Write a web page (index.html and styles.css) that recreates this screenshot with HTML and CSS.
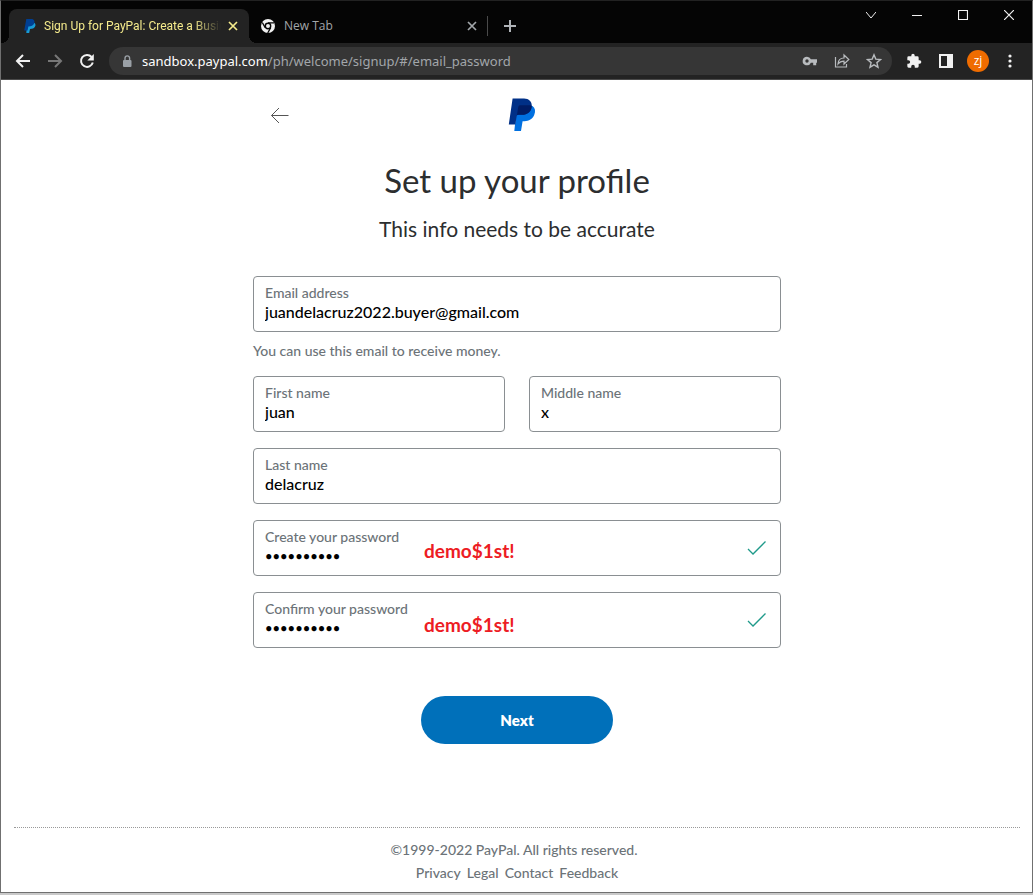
FILE: index.html
```html
<!DOCTYPE html>
<html lang="en">
<head>
<meta charset="utf-8">
<title>Sign Up for PayPal: Create a Business Account</title>
<link rel="stylesheet" href="styles.css">
</head>
<body>
<div class="window">
  <header class="chrome">
    <div class="titlebar">
      <div class="tab tab-active">
        <svg class="tab-icon" width="14" height="14" viewBox="0 0 28 34"><path fill="#179bd7" d="M7 9h17c4 2 4 7 2 10-2 4-6 5-12 5l-2 10H5z"/><path fill="#003f93" d="M5 0h12c8 0 9 6 7 11s-7 7-14 7L8 28H0z"/></svg>
        <span class="tab-title tab-title-fade">Sign Up for PayPal: Create a Busin</span>
        <button class="icon-btn tab-close" aria-label="Close tab"><svg width="10" height="10" viewBox="0 0 10 10"><path d="M1 1l8 8M9 1l-8 8" fill="none" stroke="currentColor" stroke-width="1.700"/></svg></button>
      </div>
      <div class="tab tab-idle">
        <svg class="tab-icon" width="14" height="14" viewBox="0 0 14 14"><circle cx="7" cy="7" r="7" fill="#f1f1f1"/><circle cx="7" cy="7" r="2.7" fill="#f1f1f1" stroke="#050505" stroke-width="1.4"/><path d="M7 3.8h6M4.2 8.6L1.3 3.5M9.7 8.6L6.7 14" fill="none" stroke="#050505" stroke-width="1.3"/></svg>
        <span class="tab-title">New Tab</span>
        <button class="icon-btn tab-close" aria-label="Close tab"><svg width="10" height="10" viewBox="0 0 10 10"><path d="M1 1l8 8M9 1l-8 8" fill="none" stroke="currentColor" stroke-width="1.7"/></svg></button>
      </div>
      <button class="icon-btn new-tab" aria-label="New tab"><svg width="12" height="12" viewBox="0 0 12 12"><path d="M6 0v12M0 6h12" stroke="currentColor" stroke-width="2"/></svg></button>
      <div class="window-controls">
        <button class="icon-btn" aria-label="Search tabs"><svg width="10" height="12" viewBox="0 0 10 12"><path d="M0 3l5 6 5-6" fill="none" stroke="currentColor"/></svg></button>
        <button class="icon-btn" aria-label="Minimize"><svg width="10" height="10" viewBox="0 0 10 10"><path d="M0 5.5h10" stroke="currentColor"/></svg></button>
        <button class="icon-btn" aria-label="Maximize"><svg width="10" height="10" viewBox="0 0 10 10"><path d="M.5.5h9v9h-9z" fill="none" stroke="currentColor" stroke-width="1.2"/></svg></button>
        <button class="icon-btn" aria-label="Close"><svg width="10" height="10" viewBox="0 0 10 10"><path d="M0 0l10 10M10 0L0 10" stroke="currentColor" stroke-width="1.2"/></svg></button>
      </div>
    </div>
    <div class="toolbar">
      <div class="nav">
        <button class="icon-btn" aria-label="Back"><svg width="16" height="16" viewBox="0 0 16 16"><path d="M15 8H2M8 2L2 8l6 6" fill="none" stroke="currentColor" stroke-width="2"/></svg></button>
        <button class="icon-btn muted" aria-label="Forward"><svg width="16" height="16" viewBox="0 0 16 16"><path d="M1 8h13M8 2l6 6-6 6" fill="none" stroke="currentColor" stroke-width="2"/></svg></button>
        <button class="icon-btn" aria-label="Reload"><svg width="16" height="16" viewBox="0 0 16 16"><path d="M12.6 4A6 6 0 1 0 13.8 9.500" fill="none" stroke="currentColor" stroke-width="2"/><path d="M14.800 1v6.500H8.300z" fill="currentColor"/></svg></button>
      </div>
      <div class="omnibox">
        <svg width="10" height="13" viewBox="0 0 10 13"><rect x="1" y="5" width="8.500" height="7" rx="1" fill="#9aa0a6"/><path d="M3 5V3.200a2.300 2.300 0 0 1 4.600 0V5" fill="none" stroke="#9aa0a6" stroke-width="1.400"/></svg>
        <span class="url"><b>sandbox.paypal.com</b>/ph/welcome/signup/#/email_password</span>
        <div class="omni-actions">
          <button class="icon-btn" aria-label="Saved passwords"><svg width="16" height="12" viewBox="0 0 16 12"><path fill="currentColor" fill-rule="evenodd" d="M5 1.700a4.300 4.300 0 1 0 3.900 6h2.300v2.500h3V7.700H15V4.300H8.900A4.300 4.300 0 0 0 5 1.700zM5 4.300a1.700 1.700 0 1 1 0 3.400 1.700 1.700 0 0 1 0-3.400z"/></svg></button>
          <button class="icon-btn" aria-label="Share"><svg width="16" height="16" viewBox="0 0 16 16"><path d="M1.500 4v10h11v-3M4 11c.2-4 2.500-6 6-6V2l4.800 4.500L10 11V8.200C7.300 8.200 5.500 9 4 11z" fill="none" stroke="currentColor" stroke-width="1.200"/></svg></button>
          <button class="icon-btn" aria-label="Bookmark"><svg width="16" height="16" viewBox="0 0 16 16"><path d="M8 1.800l1.800 4.300 4.700.4-3.600 3.100 1.100 4.600L8 11.800l-4 2.400 1.100-4.600-3.600-3.100 4.700-.4z" fill="none" stroke="currentColor" stroke-width="1.400"/></svg></button>
        </div>
      </div>
      <div class="extensions">
        <button class="icon-btn" aria-label="Extensions"><svg width="16" height="16" viewBox="0 0 24 24"><path fill="currentColor" d="M20.500 11H19V7a2 2 0 0 0-2-2h-4V3.500a2.500 2.500 0 0 0-5 0V5H4a2 2 0 0 0-2 2v3.800h1.500a2.700 2.700 0 0 1 0 5.400H2V20a2 2 0 0 0 2 2h3.800v-1.500a2.700 2.700 0 0 1 5.400 0V22H17a2 2 0 0 0 2-2v-4h1.500a2.500 2.500 0 0 0 0-5z"/></svg></button>
        <button class="icon-btn" aria-label="Side panel"><svg width="16" height="16" viewBox="0 0 16 16"><path fill="currentColor" fill-rule="evenodd" d="M1 1h14v14H1zM3 3v10h6V3z"/></svg></button>
        <button class="avatar" aria-label="Profile">zj</button>
        <button class="icon-btn" aria-label="Menu"><svg width="16" height="16" viewBox="0 0 16 16" fill="currentColor"><circle cx="8" cy="3" r="1.600"/><circle cx="8" cy="8" r="1.600"/><circle cx="8" cy="13" r="1.600"/></svg></button>
      </div>
    </div>
  </header>

  <div class="page">
    <main class="signup">
      <div class="brand-row">
        <button class="icon-btn back" aria-label="Go back"><svg width="20" height="18" viewBox="0 0 20 18"><path d="M1.500 9.500h17M9 2L1.500 9.500 9 17" fill="none" stroke="currentColor"/></svg></button>
        <svg class="logo" width="28" height="34" viewBox="0 0 28 34" role="img" aria-label="PayPal"><path fill="#0070e0" d="M9 8h15.500c2.700 2 3.300 5.300 1.700 9-1.800 4-5.200 6.200-9.700 6.200h-1.900L13 33H6.300z"/><path fill="#003087" d="M4.600.5H16c5 0 8 3.300 7.800 7.500-.3 6-4.600 8.800-9.800 8.800h-3.800c-.9 0-1.300.4-1.500 1.300L7.300 26.500H.8z"/><path fill="#001c64" d="M10.200 9.300c.2-1.500 1-2.100 2.400-2.100h9.300c.8 0 1.400.2 1.800.5-.2 6.200-4.500 9.100-9.700 9.100h-3.800c-.6 0-1 .2-1.300.7z"/></svg>
      </div>
      <h1>Set up your profile</h1>
      <p class="subtitle">This info needs to be accurate</p>
      <form class="form" onsubmit="return false">
        <div class="field"><label for="email">Email address</label><input id="email" type="email" value="juandelacruz2022.buyer@gmail.com"></div>
        <p class="hint">You can use this email to receive money.</p>
        <div class="name-row">
          <div class="field"><label for="first">First name</label><input id="first" type="text" value="juan"></div>
          <div class="field"><label for="middle">Middle name</label><input id="middle" type="text" value="x"></div>
        </div>
        <div class="field"><label for="last">Last name</label><input id="last" type="text" value="delacruz"></div>
        <div class="field">
          <label for="pw">Create your password</label><input id="pw" type="password" value="demo$1st!!">
          <span class="note">demo$1st!</span>
          <svg class="check" width="20" height="16" viewBox="0 0 20 16"><path d="M1 9l5 5L18.500 1.500" fill="none" stroke="#1f9a8a" stroke-width="1.300"/></svg>
        </div>
        <div class="field">
          <label for="pw2">Confirm your password</label><input id="pw2" type="password" value="demo$1st!!">
          <span class="note note-low">demo$1st!</span>
          <svg class="check" width="20" height="16" viewBox="0 0 20 16"><path d="M1 9l5 5L18.500 1.500" fill="none" stroke="#1f9a8a" stroke-width="1.300"/></svg>
        </div>
        <button class="next" type="submit">Next</button>
      </form>
    </main>
    <footer class="footer">
      <p>©1999-2022 PayPal. All rights reserved.</p>
      <nav class="links"><a href="#">Privacy</a><a href="#">Legal</a><a href="#">Contact</a><a href="#">Feedback</a></nav>
    </footer>
  </div>
</div>
</body>
</html>
```

FILE: styles.css
```css
* { box-sizing: border-box; }
body {
  margin: 0;
  padding-bottom: 2px;
  min-height: 100vh;
  display: flex;
  background: #c9c9c9;
  font-family: Lato, "Open Sans", sans-serif;
  font-weight: 500;
  color: #2c2e2f;
}
h1, p { margin: 0; }
.window {
  flex: 1;
  min-width: 0;
  display: flex;
  flex-direction: column;
  border: 1px solid #707070;
  border-top-color: #222;
  background: #fff;
}
svg { display: block; flex: none; }
.icon-btn {
  display: flex;
  padding: 0;
  border: 0;
  background: none;
  color: inherit;
}

/* Browser chrome */
.chrome {
  font-family: "Open Sans", "Noto Sans", sans-serif;
  font-weight: 400;
  color: #f1f1f1;
  background: #050505;
  border-bottom: 1px solid #4a4a4a;
}
.titlebar { display: flex; height: 42px; padding: 8px 0 0 8px; }
.tab { display: flex; align-items: center; gap: 8px; width: 240px; padding: 0 11px 0 14px; }
.tab-active { position: relative; gap: 7px; background: #232323; color: #f5eb8c; border-radius: 8px 8px 0 0; }
.tab-active::before,
.tab-active::after {
  content: "";
  position: absolute;
  bottom: 0;
  width: 8px;
  height: 8px;
}
.tab-active::before { right: 100%; background: radial-gradient(circle at 0 0, transparent 8px, #232323 8px); }
.tab-active::after { left: 100%; background: radial-gradient(circle at 100% 0, transparent 8px, #232323 8px); }
.tab-idle { width: 239px; padding-left: 12px; gap: 9px; color: #a2a6aa; border-right: 1px solid #4a4a4a; height: 20px; margin-top: 7px; padding-right: 10px; }
.tab-title { flex: 1; font-size: 12px; line-height: 18px; white-space: nowrap; overflow: hidden; }
.tab-title-fade { font-family: Roboto, "Open Sans", sans-serif; mask-image: linear-gradient(90deg, #000 84%, transparent); }
.new-tab { align-self: center; padding: 0 16px; color: #b0b4b8; }
.window-controls { display: flex; align-items: center; gap: 36px; height: 14px; margin: -1px 18px 0 auto; }
.toolbar { display: flex; align-items: center; gap: 14px; height: 36px; padding: 0 14px; background: #232323; }
.nav { display: flex; gap: 16px; }
.muted { color: #777; }
.omnibox { flex: 1; min-width: 0; display: flex; align-items: center; height: 28px; padding: 0 10px 0 13px; border-radius: 14px; background: #363636; }
.url { flex: 1; min-width: 0; margin-left: 10px; overflow: hidden; white-space: nowrap; font-family: "Noto Sans", sans-serif; font-size: 13px; line-height: 20px; color: #a2a6aa; }
.url b { font-weight: 400; color: #fff; }
.omni-actions { display: flex; align-items: center; gap: 16px; color: #b8bbbe; }
.extensions { display: flex; align-items: center; gap: 16px; }
.avatar { width: 22px; height: 22px; margin: 0 -3px; padding: 0; border: 0; border-radius: 50%; background: #ef6c00; color: #fff; font: 12px/20px "Open Sans", sans-serif; }

/* Page */
.page { flex: 1; display: flex; flex-direction: column; justify-content: space-between; padding: 18px 12px 8px 13px; }
.signup { width: 100%; max-width: 528px; margin: 0 auto; }
.brand-row { display: grid; grid-template-columns: 1fr auto 1fr; align-items: center; padding-left: 10px; }
.back { margin-left: 7px; color: #555; }
.logo { grid-column: 2; }
h1 { margin-top: 28px; font-size: 33px; line-height: 40px; font-weight: 400; text-align: center; }
.subtitle { margin-top: 16px; font-size: 21px; line-height: 26px; font-weight: 400; text-align: center; }
.form { display: flex; flex-direction: column; gap: 16px; margin-top: 34px; }
.field { position: relative; flex: 1; min-width: 0; height: 56px; padding: 7px 11px; border: 1px solid #8a8f92; border-radius: 4px; }
.field label { display: block; font-size: 14px; line-height: 18px; color: #6c7378; }
.field input { display: block; width: 100%; height: 20px; padding: 0; border: 0; outline: 0; background: none; font: inherit; font-size: 16px; line-height: 20px; color: #000; }
.field input[type="password"] { font-size: 13px; }
.form > .field { flex: none; }
.hint { margin: -7px 0 -1px; font-size: 14px; line-height: 20px; color: #6c7378; }
.name-row { display: flex; gap: 24px; }
.note { position: absolute; left: 170px; top: 18px; font-size: 19px; line-height: 24px; font-weight: 700; color: #ed1c24; }
.note-low { top: 20px; }
.check { position: absolute; right: 13px; top: 19px; }
.next { align-self: center; width: 192px; height: 48px; margin-top: 32px; border: 0; border-radius: 24px; background: #0070ba; color: #fff; font: inherit; font-size: 15px; line-height: 20px; font-weight: 800; }
.footer { margin-top: 32px; padding-top: 10px; border-top: 1px dotted #999; text-align: center; font-size: 14px; line-height: 23px; color: #6c7378; }
.footer p { margin-right: 6px; }
.links { display: flex; justify-content: center; gap: 6px; }
.links a { color: inherit; text-decoration: none; }
```
